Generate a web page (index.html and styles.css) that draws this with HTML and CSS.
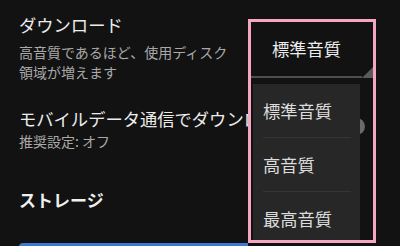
FILE: index.html
```html
<!DOCTYPE html>
<html lang="ja">
<head>
<meta charset="utf-8">
<link rel="stylesheet" href="styles.css">
</head>
<body>
<main class="settings">
  <section class="item first">
    <div class="title">ダウンロード</div>
    <div class="sub wrap">高音質であるほど、使用ディスク領域が増えます</div>
  </section>
  <section class="item second">
    <div class="title clip">モバイルデータ通信でダウンロード</div>
    <div class="sub">推奨設定: オフ</div>
  </section>
  <h2 class="header">ストレージ</h2>
  <div class="button"></div>
</main>
<div class="thumb"></div>
<div class="highlight">
  <div class="spinner">
    <span class="spinner-text">標準音質</span>
    <div class="underline"></div>
    <svg class="corner" width="11" height="11" viewBox="0 0 11 11"><polygon points="11,0 11,11 0,11" fill="#5a5a5a"/></svg>
  </div>
  <ul class="popup">
    <li class="opt">標準音質</li>
    <li class="opt">高音質</li>
    <li class="opt">最高音質</li>
  </ul>
</div>
</body>
</html>
```
FILE: styles.css
```css
html, body {
  margin: 0;
  padding: 0;
  width: 400px;
  height: 246px;
  overflow: hidden;
  background: #121212;
  font-family: "Noto Sans CJK JP", "Noto Sans", sans-serif;
}
.settings {
  padding-left: 19px;
  display: flex;
  flex-direction: column;
}
.item {
  display: flex;
  flex-direction: column;
}
.first {
  padding-top: 13px;
}
.second {
  padding-top: 25px;
}
.title {
  font-size: 17.3px;
  line-height: 24px;
  color: #ececec;
}
.clip {
  white-space: nowrap;
  overflow: hidden;
  width: 229px;
}
.first .title {
  margin-bottom: 5px;
}
.sub {
  font-size: 14px;
  line-height: 20px;
  color: #a9a9a9;
}
.wrap {
  width: 216px;
}
.header {
  margin: 37px 0 0 0;
  font-size: 17px;
  line-height: 24px;
  font-weight: 700;
  color: #f0f0f0;
}
.button {
  margin-top: 31px;
  width: 229px;
  height: 4px;
  background: #3b7ad3;
  border-radius: 6px 0 0 0;
}
.thumb {
  position: absolute;
  left: 348px;
  top: 118px;
  width: 17px;
  height: 17px;
  border-radius: 50%;
  background: #6a6a6a;
}
.highlight {
  position: absolute;
  left: 248px;
  top: 19px;
  width: 122px;
  height: 218px;
  border: 3px solid #f6a6c1;
  background: transparent;
  overflow: hidden;
}
.spinner {
  position: relative;
  height: 56px;
  background: #121212;
  display: flex;
  justify-content: center;
  padding-right: 11px;
}
.spinner-text {
  margin-top: 15px;
  font-size: 17.3px;
  line-height: 24px;
  color: #ececec;
}
.underline {
  position: absolute;
  left: 0;
  right: 11px;
  bottom: 0;
  height: 2px;
  background: #4e4e4e;
}
.corner {
  position: absolute;
  right: 0;
  bottom: 0;
}
.popup {
  list-style: none;
  margin: 6px 0 0 2px;
  padding: 0;
  width: 107px;
  height: 160px;
  background: #272727;
}
.opt {
  margin: 0 9px 0 10px;
  height: 54px;
  line-height: 54px;
  font-size: 17.3px;
  color: #dcdcdc;
  border-bottom: 1px solid #353535;
  box-sizing: border-box;
}
.opt:last-child {
  border-bottom: none;
}
```
